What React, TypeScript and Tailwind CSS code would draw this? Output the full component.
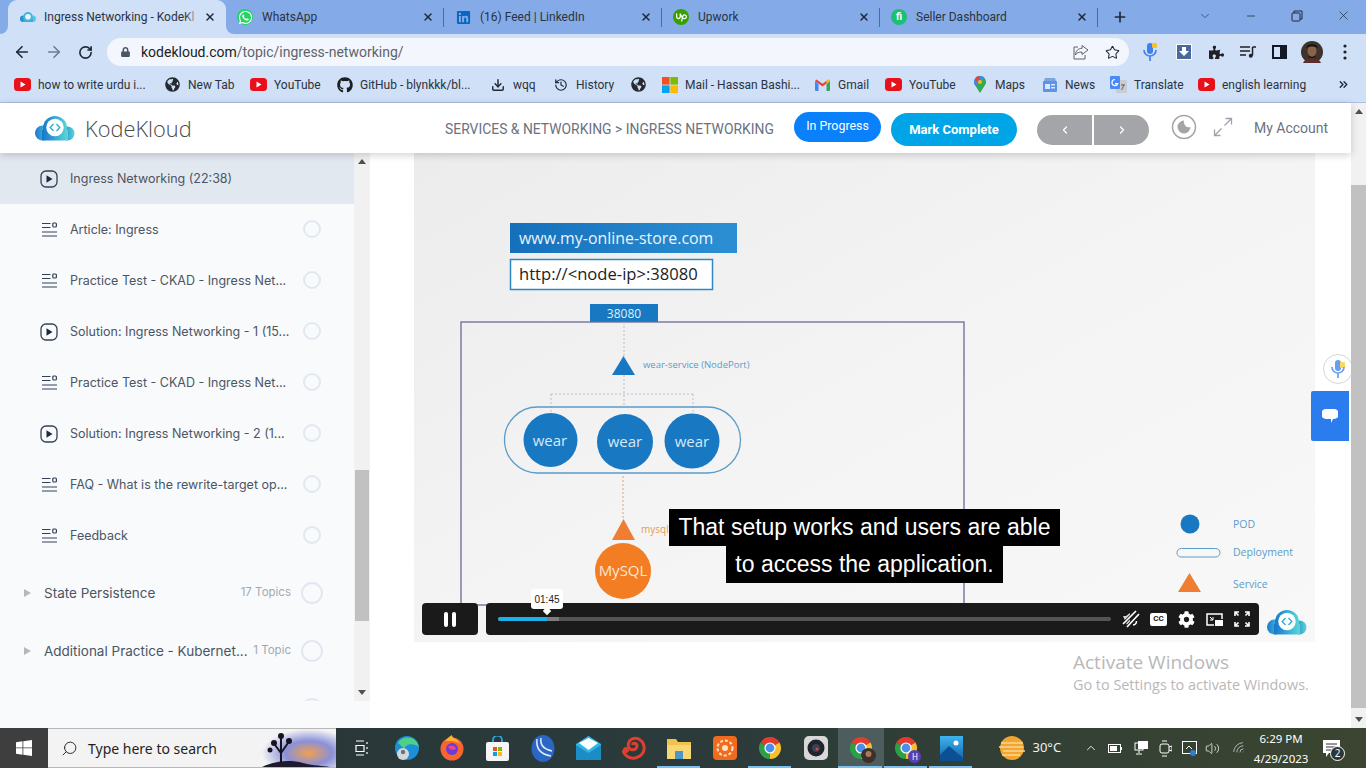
import React from "react";
import { ArrowLeft, ArrowRight, RotateCw, Star, Download, History, X, Plus, ChevronDown, Minus, ChevronsRight, ChevronLeft, ChevronRight, ChevronUp, Search, Volume2, Wifi } from "lucide-react";
import { FaWhatsapp, FaLinkedin, FaGithub, FaGlobeAmericas, FaPuzzlePiece, FaCog, FaLock } from "react-icons/fa";
import { SiUpwork } from "react-icons/si";

const Yt = () => (
  <svg width="17" height="13" viewBox="0 0 17 13" className="shrink-0"><rect width="17" height="13" rx="3.5" fill="#e8101a" /><path d="M6.5 3.5v6l5-3z" fill="#fff" /></svg>
);
const Globe = () => <FaGlobeAmericas className="w-[15px] h-[15px] text-[#26292e] shrink-0" />;
const Ms = () => (
  <svg width="16" height="16" viewBox="0 0 16 16" className="shrink-0"><rect width="7.6" height="7.6" fill="#f25022" /><rect x="8.4" width="7.6" height="7.6" fill="#7fba00" /><rect y="8.4" width="7.6" height="7.6" fill="#00a4ef" /><rect x="8.4" y="8.4" width="7.6" height="7.6" fill="#ffb900" /></svg>
);
const Gmail = () => (
  <svg width="15" height="12" viewBox="0 0 15 12" className="shrink-0"><path d="M0 2v9a1 1 0 0 0 1 1h2.5V5z" fill="#4285f4" /><path d="M15 2v9a1 1 0 0 1-1 1h-2.5V5z" fill="#34a853" /><path d="M0 2l7.5 5.5L15 2 13.5.4 7.5 4.8 1.500.4z" fill="#ea4335" /><path d="M11.500 5L15 2V1.500L13.500.4 11.500 2z" fill="#fbbc04" /></svg>
);
const Maps = () => (
  <svg width="12" height="17" viewBox="0 0 12 17" className="shrink-0"><path d="M6 0a6 6 0 0 0-4.600 9.800L6 17l4.600-7.200A6 6 0 0 0 6 0z" fill="#34a853" /><path d="M6 0a6 6 0 0 1 4.600 2.200L1.400 9.800A6 6 0 0 1 6 0z" fill="#4285f4" /><path d="M1.400 2.200A6 6 0 0 1 6 0v3L2.500 6z" fill="#ea4335" /><circle cx="6" cy="6" r="2" fill="#fbbc04" /></svg>
);
const News = () => (
  <svg width="16" height="15" viewBox="0 0 16 15" className="shrink-0"><path d="M3 1h10l1 3H2z" fill="#7fa3dd" /><rect x="1" y="4" width="14" height="11" rx="1" fill="#5a93e8" /><rect x="3" y="7" width="5" height="5" fill="#dbe7fb" /><rect x="9" y="7" width="4" height="1.500" fill="#dbe7fb" /><rect x="9" y="10" width="4" height="1.500" fill="#dbe7fb" /></svg>
);
const Translate = () => (
  <svg width="17" height="17" viewBox="0 0 17 17" className="shrink-0"><rect x="6" y="4" width="11" height="13" rx="1" fill="#c8ccd3" /><rect width="10" height="13" rx="1" fill="#4a8af4" /><path d="M5 3.500a3 3 0 1 0 2.700 4.200H5" stroke="#fff" strokeWidth="1.200" fill="none" /><path d="M11 9h4M13 8v1M11.500 14l2.500-5" stroke="#666" strokeWidth="1" fill="none" /></svg>
);

const Tab = ({ icon, title, active }: { icon: React.ReactNode; title: string; active?: boolean }) => (
  <div className={active ? "relative w-[218px] h-[34px] flex items-center pl-[12px] bg-[#cfe0f7] rounded-t-[9px] shrink-0" : "relative w-[218px] h-[34px] flex items-center pl-[11px] shrink-0"}>
    {active && (
      <>
        <svg width="8" height="8" viewBox="0 0 8 8" className="absolute -left-[8px] bottom-0"><path d="M8 0v8H0a8 8 0 0 0 8-8z" fill="#cfe0f7" /></svg>
        <svg width="8" height="8" viewBox="0 0 8 8" className="absolute -right-[8px] bottom-0"><path d="M0 0v8H8a8 8 0 0 1-8-8z" fill="#cfe0f7" /></svg>
      </>
    )}
    <div className="w-[16px] h-[16px] flex items-center justify-center shrink-0">{icon}</div>
    <div className={active ? "relative ml-[8px] w-[156px] h-[16px] leading-[16px] whitespace-nowrap text-[12px] text-[#2b3240]" : "ml-[9px] w-[160px] whitespace-nowrap text-[12px] text-[#2b3240]"}>
      {title}
      {active && <div className="absolute right-0 top-0 bottom-0 w-[16px] bg-gradient-to-r from-transparent to-[#cfe0f7]" />}
    </div>
    <X className="absolute right-[10px] top-[11px] w-[12px] h-[12px] text-[#1f2937]" strokeWidth={3} />
    {!active && <div className="absolute right-0 top-[8px] w-px h-[19px] bg-[#56698a]" />}
  </div>
);

const KLogo = ({ w, h }: { w: number; h: number }) => (
  <svg width={w} height={h} viewBox="0 0 40 25" className="shrink-0">
    <defs>
      <linearGradient id="kg" x1="0" x2="1" y1="0" y2="0"><stop offset="0" stopColor="#1878cc" /><stop offset="1" stopColor="#5ad6d8" /></linearGradient>
    </defs>
    <circle cx="7.500" cy="17" r="7.500" fill="url(#kg)" />
    <circle cx="32.500" cy="17.500" r="7" fill="url(#kg)" />
    <rect x="7" y="14" width="26" height="10.500" fill="url(#kg)" />
    <circle cx="20" cy="12" r="12" fill="url(#kg)" />
    <circle cx="20" cy="11.500" r="8.700" fill="#fff" />
    <path d="M18.500 8l-3.300 3.500 3.300 3.500M21.500 8l3.300 3.500-3.300 3.500" fill="none" stroke="#29a9d8" strokeWidth="1.300" />
  </svg>
);

const PlayIco = () => (
  <svg width="18" height="18" viewBox="0 0 18 18" className="shrink-0"><rect x="1" y="1" width="16" height="16" rx="5" fill="none" stroke="#334155" strokeWidth="1.300" /><path d="M6.500 5.300v7.400l6-3.700z" fill="#1e293b" /></svg>
);
const DocIco = () => (
  <svg width="15" height="15" viewBox="0 0 15 15" className="shrink-0"><path d="M0 1.500h8.500M0 5.500h8.500M0 10h15M0 14h15" stroke="#334155" strokeWidth="1.200" /><rect x="10.800" y="1" width="3.600" height="4" rx="1" fill="none" stroke="#334155" strokeWidth="1.200" /></svg>
);

const Topic = ({ t, video, current }: { t: string; video?: boolean; current?: boolean }) => (
  <div className={current ? "h-[51px] flex items-center pl-[40px] bg-[#e2e8f0]" : "h-[51px] flex items-center pl-[40px]"}>
    <div className="w-[18px] flex justify-center">{video ? <PlayIco /> : <DocIco />}</div>
    <div className="ml-[12px] mt-[2px] w-[233px] text-[12.500px] text-[#4b5563] whitespace-nowrap font-['Inter',sans-serif]">{t}</div>
    <div className="-mt-[1px] w-[18px] h-[18px] rounded-full border-2 border-[#e2e8f0]" />
  </div>
);
const Group = ({ t, n }: { t: string; n: string }) => (
  <div className="h-[58px] flex items-center pl-[24px] font-['Inter',sans-serif]">
    <svg width="7" height="8" viewBox="0 0 7 8" className="shrink-0"><path d="M0 0v8l7-4z" fill="#b4b8be" /></svg>
    <div className="ml-[13px] w-[202px] text-[13.500px] text-[#4b5563] whitespace-nowrap">{t}</div>
    <div className="w-[45px] text-right text-[11.500px] text-[#a3a9b3] whitespace-nowrap flex justify-end">{n}</div>
    <div className="ml-[10px] w-[22px] h-[22px] rounded-full border-2 border-[#e2e8f0] shrink-0" />
  </div>
);

const Chrome = ({ s = 24 }: { s?: number }) => (
  <svg width={s} height={s} viewBox="0 0 24 24" className="shrink-0">
    <path d="M12 12L2.470 6.500A11 11 0 0 1 21.530 6.500z" fill="#e33b2e" />
    <path d="M12 12L21.530 6.500A11 11 0 0 1 12 23z" fill="#f6c02c" />
    <path d="M12 12V23A11 11 0 0 1 2.470 6.500z" fill="#2d9f47" />
    <circle cx="12" cy="12" r="5.600" fill="#fff" />
    <circle cx="12" cy="12" r="4.400" fill="#4a90e8" />
  </svg>
);

const Slot = ({ children, active, line }: { children: React.ReactNode; active?: boolean; line?: boolean }) => (
  <div className={active ? "relative w-[45.4px] h-[40px] flex items-center justify-center bg-[#4d5c5c] shrink-0" : "relative w-[45.4px] h-[40px] flex items-center justify-center shrink-0"}>
    {children}
    {line && <div className="absolute bottom-0 left-0 right-[2px] h-[2px] bg-[#7cc0f0]" />}
  </div>
);

const Bm = ({ icon, label, w }: { icon: React.ReactNode; label?: string; w: string }) => (
  <div className={`${w} flex items-center shrink-0`}>
    <div className="w-[17px] flex justify-center shrink-0">{icon}</div>
    {label && <span className="ml-[7px] whitespace-nowrap">{label}</span>}
  </div>
);

export default function App() {
  return (
    <div className="relative w-[1366px] h-[768px] overflow-hidden flex flex-col bg-white font-['Roboto',sans-serif]">
      {/* Tab strip */}
      <div className="h-[34px] bg-[#84abe8] flex items-center pl-[8px] shrink-0">
        <Tab active title="Ingress Networking - KodeKl" icon={<svg width="16" height="12" viewBox="0 0 40 25"><circle cx="8" cy="17" r="8" fill="#2a8fd0" /><circle cx="32" cy="17" r="8" fill="#5ac8dc" /><rect x="8" y="14" width="24" height="11" fill="#3aa7d8" /><circle cx="20" cy="12" r="12" fill="#46b4dc" /><circle cx="20" cy="12" r="7" fill="#e8f6fb" /></svg>} />
        <Tab title="WhatsApp" icon={<div className="w-[16px] h-[16px] rounded-full bg-[#25d366] flex items-center justify-center"><FaWhatsapp className="w-[15px] h-[15px] text-white" /></div>} />
        <Tab title="(16) Feed | LinkedIn" icon={<FaLinkedin className="w-[15px] h-[15px] text-[#0a66c2]" />} />
        <Tab title="Upwork" icon={<div className="w-[16px] h-[16px] rounded-full bg-[#37a000] flex items-center justify-center"><SiUpwork className="w-[11px] h-[11px] text-white" /></div>} />
        <Tab title="Seller Dashboard" icon={<div className="w-[16px] h-[16px] rounded-full bg-[#1dbf73] flex items-center justify-center text-[10px] font-bold text-white leading-none">fi</div>} />
        <Plus className="ml-[14px] w-[16px] h-[16px] text-[#1f2937]" strokeWidth={2.5} />
        <ChevronDown className="ml-[70px] w-[14px] h-[14px] text-[#374151] -mt-[3px]" strokeWidth={1.300} />
        <Minus className="ml-[33px] w-[12px] h-[12px] text-[#1f2937] -mt-[3px]" strokeWidth={1.500} />
        <svg width="12" height="12" viewBox="0 0 12 12" className="ml-[34px] -mt-[3px]"><path d="M3 3V1h8v8H9" fill="none" stroke="#1f2937" /><rect x="1" y="3" width="8" height="8" rx="1" fill="none" stroke="#1f2937" /></svg>
        <X className="ml-[33px] w-[15px] h-[15px] text-[#1f2937] -mt-[3px]" strokeWidth={1.100} />
      </div>
      {/* Toolbar */}
      <div className="h-[36px] bg-[#cfe0f7] flex items-center pl-[13px] shrink-0">
        <ArrowLeft className="w-[18px] h-[18px] text-[#1f2937]" strokeWidth={2.200} />
        <ArrowRight className="ml-[14px] w-[18px] h-[18px] text-[#6f7c8e]" strokeWidth={2.200} />
        <RotateCw className="ml-[15px] w-[15px] h-[15px] text-[#1f2937]" strokeWidth={2.600} />
        <div className="ml-[14px] w-[1022px] h-[28px] rounded-full bg-[#f3f7fd] flex items-center pl-[14px]">
          <FaLock className="w-[9px] h-[10px] text-[#4b5563]" />
          <span className="ml-[11px] w-[262px] whitespace-nowrap text-[14px] text-[#202124]">kodekloud.com<span className="text-[#5f6368]">/topic/ingress-networking/</span></span>
          <svg width="16" height="16" viewBox="0 0 16 16" className="ml-[670px]"><path d="M9 1.500l6 4.500-6 4.500V8C5.500 8 3.500 9 2.500 11 2.500 7 5 4.500 9 4.300z M5 3H1v12h11v-4" fill="none" stroke="#5f6368" strokeWidth="1" /></svg>
          <Star className="ml-[16px] w-[15px] h-[15px] text-[#1f2937]" strokeWidth={1.700} />
        </div>
        <svg width="14" height="20" viewBox="0 0 14 20" className="ml-[14px]"><rect x="4" y="1" width="6" height="11" rx="3" fill="#3b82f0" /><rect x="9" y="1" width="5" height="5" rx="1" fill="#fbc02d" /><path d="M1 8a6 6 0 0 0 12 0M7 14v5" fill="none" stroke="#3b82f0" strokeWidth="1.700" /></svg>
        <div className="ml-[19px] w-[16px] h-[16px] bg-[#4a6a9d] border border-white flex items-center justify-center">
          <svg width="10" height="10" viewBox="0 0 10 10"><path d="M3 0h4v4h3L5 9 0 4h3z" fill="#fff" /></svg>
        </div>
        <FaPuzzlePiece className="ml-[17px] w-[15px] h-[15px] text-[#202124]" />
        <svg width="16" height="14" viewBox="0 0 16 14" className="ml-[16px]"><path d="M0 2h10M0 6h10M0 10h6" stroke="#202124" strokeWidth="1.500" /><path d="M12.500 2v8.500" stroke="#202124" strokeWidth="1.500" /><path d="M12.500 2H16" stroke="#202124" strokeWidth="1.500" /><circle cx="10.800" cy="10.800" r="2" fill="#202124" /></svg>
        <svg width="15" height="14" viewBox="0 0 15 14" className="ml-[16px]"><rect x="1" y="1" width="13" height="12" fill="none" stroke="#111827" strokeWidth="2" /><rect x="8" y="1" width="6" height="12" fill="#111827" /></svg>
        <svg width="22" height="22" viewBox="0 0 22 22" className="ml-[14px]"><circle cx="11" cy="11" r="11" fill="#3f342c" /><ellipse cx="11" cy="10" rx="4.500" ry="5.500" fill="#8a6449" /><path d="M5 7c1-5 11-5 12 0-3-2-9-2-12 0z" fill="#14100c" /><path d="M7 13c1 4 7 4 8 0l-1 4H8z" fill="#211a15" /><path d="M2 22c2-6 16-6 18 0z" fill="#5a2e2c" /></svg>
        <svg width="4" height="16" viewBox="0 0 4 16" className="ml-[20px]"><circle cx="2" cy="2" r="1.600" fill="#202124" /><circle cx="2" cy="8" r="1.600" fill="#202124" /><circle cx="2" cy="14" r="1.600" fill="#202124" /></svg>
      </div>
      {/* Bookmarks */}
      <div className="h-[33px] bg-[#cfe0f7] border-b border-[#aebfe0] flex items-center pl-[14px] pb-[3px] text-[12px] text-[#2b3240] shrink-0">
        <Bm w="w-[150px]" icon={<Yt />} label="how to write urdu i..." />
        <Bm w="w-[86px]" icon={<Globe />} label="New Tab" />
        <Bm w="w-[86px]" icon={<Yt />} label="YouTube" />
        <Bm w="w-[153px]" icon={<FaGithub className="w-[16px] h-[16px] text-[#1b1f23]" />} label="GitHub - blynkkk/bl..." />
        <Bm w="w-[63px]" icon={<Download className="w-[14px] h-[14px] text-[#1f2937]" strokeWidth={2.500} />} label="wqq" />
        <Bm w="w-[78px]" icon={<History className="w-[14px] h-[14px] text-[#1f2937]" />} label="History" />
        <Bm w="w-[31px]" icon={<Globe />} />
        <Bm w="w-[153px]" icon={<Ms />} label="Mail - Hassan Bashi..." />
        <Bm w="w-[71px]" icon={<Gmail />} label="Gmail" />
        <Bm w="w-[86px]" icon={<Yt />} label="YouTube" />
        <Bm w="w-[70px]" icon={<Maps />} label="Maps" />
        <Bm w="w-[69px]" icon={<News />} label="News" />
        <Bm w="w-[88px]" icon={<Translate />} label="Translate" />
        <Bm w="w-[128px]" icon={<Yt />} label="english learning" />
        <ChevronsRight className="ml-[11px] w-[13px] h-[13px] text-[#1f2937]" strokeWidth={2.500} />
      </div>
      {/* Page */}
      <div className="flex-1 min-h-0 flex">
        <div className="flex-1 min-w-0 flex flex-col">
          <div className="relative z-10 h-[50px] bg-white shadow-[0_2px_8px_rgba(0,0,0,0.18)] flex items-center pl-[35px] shrink-0">
            <KLogo w={40} h={25} />
            <span className="ml-[10px] w-[106px] mt-[2px] text-[21.800px] text-[#4a4a4a] font-['Open_Sans',sans-serif] font-light whitespace-nowrap">KodeKloud</span>
            <span className="ml-[254px] w-[329px] mt-[2px] whitespace-nowrap text-[13.900px] text-[#6b7280]">SERVICES &amp; NETWORKING &gt; INGRESS NETWORKING</span>
            <div className="ml-[20px] -mt-[3px] w-[87px] h-[30px] rounded-full bg-[#0a80fb] text-white text-[12.400px] flex items-center justify-center">In Progress</div>
            <div className="ml-[10px] mt-[3px] w-[126px] h-[33px] rounded-full bg-[#00a5e8] text-white text-[13px] font-bold flex items-center justify-center">Mark Complete</div>
            <div className="ml-[20px] mt-[4px] w-[55px] h-[30px] rounded-l-full bg-[#a3a5a8] flex items-center justify-center"><ChevronLeft className="w-[12px] h-[12px] text-white" strokeWidth={2.500} /></div>
            <div className="ml-[2px] mt-[4px] w-[55px] h-[30px] rounded-r-full bg-[#a3a5a8] flex items-center justify-center"><ChevronRight className="w-[12px] h-[12px] text-white" strokeWidth={2.500} /></div>
            <svg width="26" height="26" viewBox="0 0 26 26" className="ml-[22px] -mt-[2px]"><circle cx="13" cy="13" r="11.500" fill="none" stroke="#a3a5a8" strokeWidth="1.500" /><path d="M13 6.500a6.500 6.500 0 1 0 6.500 6.500 5.200 5.200 0 0 1-6.500-6.500z" fill="#a3a5a8" /></svg>
            <svg width="20" height="20" viewBox="0 0 20 20" className="ml-[16px] -mt-[2px]"><path d="M11.500 8.500L18.500 1.500M12.500 1.500h6v6M8.500 11.500L1.500 18.500M1.500 12.500v6h6" fill="none" stroke="#9ca3af" strokeWidth="1.300" /></svg>
            <span className="ml-[21px] text-[14px] text-[#6b7280] whitespace-nowrap">My Account</span>
          </div>
          <div className="flex-1 min-h-0 flex">
            {/* Sidebar */}
            <div className="w-[370px] shrink-0 bg-[#f8fafc] flex flex-col">
              <div className="h-[548px] flex overflow-hidden">
                <div className="w-[354px] shrink-0 overflow-hidden">
                  <Topic current video t="Ingress Networking (22:38)" />
                  <Topic t="Article: Ingress" />
                  <Topic t="Practice Test - CKAD - Ingress Net..." />
                  <Topic video t="Solution: Ingress Networking - 1 (15..." />
                  <Topic t="Practice Test - CKAD - Ingress Net..." />
                  <Topic video t="Solution: Ingress Networking - 2 (1..." />
                  <Topic t="FAQ - What is the rewrite-target op..." />
                  <Topic t="Feedback" />
                  <div className="h-[3px]" />
                  <Group t="State Persistence" n="17 Topics" />
                  <Group t="Additional Practice - Kubernet..." n="1 Topic" />
                  <Group t="" n="" />
                </div>
                <div className="w-[16px] bg-[#f1f1f1] flex flex-col items-center shrink-0">
                  <div className="h-[17px] flex items-center"><svg width="8" height="5" viewBox="0 0 8 5"><path d="M4 0l4 5H0z" fill="#505050" /></svg></div>
                  <div className="mt-[300px] w-[14px] h-[152px] bg-[#c1c1c1]" />
                  <div className="mt-[63px] h-[17px] flex items-center"><svg width="8" height="5" viewBox="0 0 8 5"><path d="M4 5l4-5H0z" fill="#505050" /></svg></div>
                </div>
              </div>
            </div>
            {/* Content */}
            <div className="flex-1 min-w-0 pl-[44px]">
              <div className="relative w-[901px] h-[489px] bg-gradient-to-br from-[#ececec] via-[#f4f4f4] to-[#f8f8f8] overflow-hidden">
                <svg className="absolute inset-0" width="901" height="489" viewBox="414 153 901 489" fontFamily="'Open Sans',sans-serif">
                  <defs>
                    <linearGradient id="bb" x1="0" x2="1" y1="0" y2="0"><stop offset="0" stopColor="#1570bb" /><stop offset="1" stopColor="#2c8fd4" /></linearGradient>
                  </defs>
                  <rect x="510" y="223" width="227" height="30" fill="url(#bb)" />
                  <text x="519" y="244" fontSize="15.900" fill="#eaf4fb">www.my-online-store.com</text>
                  <rect x="510.500" y="259.500" width="202" height="30" fill="#fff" stroke="#2f86c4" strokeWidth="1.500" />
                  <text x="519" y="280" fontSize="16.600" fill="#222">http://&lt;node-ip&gt;:38080</text>
                  <rect x="590" y="304" width="68" height="18" fill="#1878c2" />
                  <text x="624" y="318" fontSize="12" fill="#dff0fb" textAnchor="middle">38080</text>
                  <rect x="461" y="322" width="503" height="283" fill="none" stroke="#6b6b96" strokeWidth="1.300" />
                  <path d="M624 322v34" stroke="#b5c0cc" strokeDasharray="2 2" />
                  <path d="M624 375v32M551 394h142M551 394v19M693 394v19" stroke="#b5c0cc" strokeDasharray="2 2" fill="none" />
                  <path d="M623.500 356l11.500 19h-23z" fill="#1878c2" />
                  <text x="643" y="368" fontSize="9.500" fill="#5a9ccc">wear-service (NodePort)</text>
                  <rect x="504.500" y="407" width="236" height="66" rx="33" fill="none" stroke="#5b9cc8" strokeWidth="1.300" />
                  <circle cx="550.500" cy="440" r="27" fill="#1878c2" />
                  <circle cx="625" cy="442" r="28" fill="#1878c2" />
                  <circle cx="692" cy="441" r="27.500" fill="#1878c2" />
                  <text x="550" y="446" fontSize="15" fill="#d6e9f6" textAnchor="middle">wear</text>
                  <text x="625" y="447" fontSize="15" fill="#d6e9f6" textAnchor="middle">wear</text>
                  <text x="692" y="447" fontSize="15" fill="#d6e9f6" textAnchor="middle">wear</text>
                  <path d="M623 476v43" stroke="#d8a37c" strokeDasharray="2 2" />
                  <path d="M623.500 519l11.500 21h-23z" fill="#ef7d32" />
                  <text x="641" y="533" fontSize="10" fill="#e69a55">mysql</text>
                  <circle cx="623" cy="571" r="28" fill="#f37d22" />
                  <text x="623" y="576" fontSize="15" fill="#fde6d0" textAnchor="middle">MySQL</text>
                  <circle cx="1190" cy="524" r="9.500" fill="#1878c2" />
                  <text x="1233" y="528" fontSize="10.500" fill="#5a9ccc">POD</text>
                  <rect x="1177" y="548.500" width="43" height="8.500" rx="4.200" fill="none" stroke="#5b9cc8" />
                  <text x="1233" y="556" fontSize="10.500" fill="#5a9ccc">Deployment</text>
                  <path d="M1189.500 573l11.500 19h-23z" fill="#ef7d32" />
                  <text x="1233" y="588" fontSize="10.500" fill="#5a9ccc">Service</text>
                </svg>
                {/* Captions */}
                <div className="absolute left-[255px] top-[356px] w-[391px] h-[37px] bg-black text-white text-[23px] font-['Liberation_Sans',sans-serif] flex items-center justify-center whitespace-nowrap">That setup works and users are able</div>
                <div className="absolute left-[312px] top-[393px] w-[277px] h-[37px] bg-black text-white text-[23px] font-['Liberation_Sans',sans-serif] flex items-center justify-center whitespace-nowrap">to access the application.</div>
                {/* Controls */}
                <div className="absolute left-[8px] top-[450px] right-[56px] h-[32px] flex gap-[8px]">
                  <div className="w-[56px] rounded-[4px] bg-[#1a1a1a] flex items-center justify-center gap-[4px]">
                    <div className="w-[4px] h-[15px] rounded-[2px] bg-white" />
                    <div className="w-[4px] h-[15px] rounded-[2px] bg-white" />
                  </div>
                  <div className="relative flex-1 rounded-[4px] bg-[#1a1a1a] flex items-center pl-[12px]">
                    <div className="w-[613px] h-[4px] bg-[#555] rounded-full flex">
                      <div className="w-[49px] h-[4px] bg-[#1ab0e8] rounded-l-full" />
                      <div className="w-[12px] h-[4px] bg-[#7d7d7d]" />
                    </div>
                    <svg width="18" height="18" viewBox="0 0 18 18" className="ml-[11px]"><path d="M1 6h3l4-3v9l-3 3z" fill="#d8d8d8" /><path d="M1 14L14 1M5 17L17 4" stroke="#1a1a1a" strokeWidth="3.200" /><path d="M1 14L14 1M5 17L17 4" stroke="#fff" strokeWidth="1.700" /><path d="M11 15a4 4 0 0 0 3.500-4" fill="none" stroke="#fff" strokeWidth="1.500" /></svg>
                    <div className="ml-[10px] w-[17px] h-[13px] rounded-[2px] bg-white flex items-center justify-center text-[8px] font-bold text-[#1a1a1a] leading-none">CC</div>
                    <FaCog className="ml-[11px] w-[17px] h-[17px] text-white" />
                    <svg width="17" height="13" viewBox="0 0 17 13" className="ml-[11px]"><path d="M8 12H1V1h15v5" fill="none" stroke="#fff" strokeWidth="1.500" /><rect x="9" y="7" width="8" height="6" fill="#fff" /><path d="M4 4l3 3M4 7h3V4" fill="none" stroke="#fff" /></svg>
                    <svg width="16" height="16" viewBox="0 0 16 16" className="ml-[11px]"><path d="M1 5V1h4M1 1l3.500 3.500M11 1h4v4M15 1l-3.500 3.500M1 11v4h4M1 15l3.500-3.500M15 11v4h-4M15 15l-3.500-3.500" fill="none" stroke="#fff" strokeWidth="1.600" /></svg>
                    <div className="absolute left-[45px] -top-[14px] w-[32px] h-[20px] rounded-[3px] bg-white text-[10px] text-[#222] flex items-center justify-center font-['Liberation_Sans',sans-serif]">01:45</div>
                    <div className="absolute left-[58px] top-[5px] w-[6px] h-[6px] rotate-45 bg-white" />
                  </div>
                </div>
                <div className="absolute left-[853px] top-[457px]"><KLogo w={40} h={25} /></div>
              </div>
            </div>
          </div>
        </div>
        {/* Page scrollbar */}
        <div className="w-[15px] bg-[#f1f1f1] flex flex-col items-center shrink-0">
          <div className="h-[17px] flex items-center"><svg width="8" height="5" viewBox="0 0 8 5"><path d="M4 0l4 5H0z" fill="#505050" /></svg></div>
          <div className="mt-[65px] w-full h-[523px] bg-[#c1c1c1]" />
          <div className="mt-[3px] h-[17px] flex items-center"><svg width="8" height="5" viewBox="0 0 8 5"><path d="M4 5l4-5H0z" fill="#505050" /></svg></div>
        </div>
      </div>
      {/* Taskbar */}
      <div className="h-[40px] bg-gradient-to-r from-[#273537] via-[#2b3a3a] to-[#3b4530] flex items-center text-white shrink-0 font-['Noto_Sans',sans-serif]">
        <div className="w-[48px] h-[40px] bg-[#3e3e3e] flex items-center justify-center">
          <svg width="16" height="16" viewBox="0 0 16 16"><path d="M0 2.200L6.500 1.300V7.500H0zM7.300 1.200L16 0V7.500H7.300zM0 8.300H6.500V14.700L0 13.800zM7.300 8.300H16V16L7.300 14.800z" fill="#fff" /></svg>
        </div>
        <div className="relative w-[288px] h-[40px] bg-[#f3f3f3] border-y border-[#b8b8b8] flex items-center pl-[13px] text-[14px] text-[#1f1f1f] overflow-hidden">
          <Search className="w-[17px] h-[17px] text-[#1f1f1f] -scale-x-100" strokeWidth={1.300} />
          <span className="ml-[10px] whitespace-nowrap font-['Noto_Sans',sans-serif]">Type here to search</span>
          <svg width="78" height="40" viewBox="0 0 78 40" className="absolute right-0 top-0">
            <defs><radialGradient id="sk" cx="0.65" cy="0.6" r="0.6"><stop offset="0" stopColor="#f0a050" /><stop offset="0.5" stopColor="#8a90d8" /><stop offset="1" stopColor="#f3f3f3" /></radialGradient></defs>
            <rect width="78" height="40" fill="url(#sk)" />
            <path d="M0 40c15-8 30-10 45-6s25 2 33 6z" fill="#1d1a2c" />
            <path d="M23 34V18M23 24l-6-8M23 24l7-10M23 20v-12" stroke="#161222" strokeWidth="2" />
            <circle cx="16" cy="14" r="3" fill="#161222" /><circle cx="23" cy="7" r="3" fill="#161222" /><circle cx="31" cy="12" r="3" fill="#161222" /><circle cx="12" cy="21" r="2.500" fill="#161222" />
          </svg>
        </div>
        <div className="flex ml-[3px]">
          <Slot><svg width="17" height="17" viewBox="0 0 17 17"><path d="M3 1h8M3 5.500h8v6H3zM3 15h8M14 2v2M14 7v2M14 12v2" stroke="#fff" fill="none" strokeWidth="1.200" /></svg></Slot>
          <Slot><svg width="26" height="26" viewBox="0 0 26 26"><circle cx="13" cy="13" r="12" fill="#1b8fd8" /><path d="M4 8C8 0 22 0 25 12c-5-4-13-4-15 2-2-3-4-4-6-6z" fill="#4fd08a" /><circle cx="9" cy="19" r="6" fill="#d3d8dc" /><circle cx="9" cy="17" r="2.200" fill="#6b7280" /></svg></Slot>
          <Slot><svg width="24" height="26" viewBox="0 0 24 26"><circle cx="12" cy="14" r="11.500" fill="#f8662f" /><path d="M5 6C9 2 10 1 12 0c0 3 3 3 5 5l3 4C15 5 9 6 5 6z" fill="#ffb02e" /><circle cx="12" cy="14" r="6" fill="#6d3bd6" /><path d="M8 12c3-3 8-1 8 2-3 2-6 1-8-2z" fill="#e9458c" /></svg></Slot>
          <Slot><svg width="23" height="25" viewBox="0 0 23 25"><path d="M7 7V4a4.500 4.500 0 0 1 9 0v3" fill="none" stroke="#27a8e0" strokeWidth="1.800" /><rect x="0" y="6" width="23" height="19" rx="2" fill="#f5f5f5" /><rect x="7" y="11" width="4" height="4" fill="#f25022" /><rect x="12" y="11" width="4" height="4" fill="#7fba00" /><rect x="7" y="16" width="4" height="4" fill="#00a4ef" /><rect x="12" y="16" width="4" height="4" fill="#ffb900" /></svg></Slot>
          <Slot><svg width="24" height="27" viewBox="0 0 24 27"><ellipse cx="12" cy="13.500" rx="11.500" ry="13.500" fill="#2c66c4" /><path d="M6 4c-1 8 2 15 14 17M10 3c-1 6 2 11 11 13" fill="none" stroke="#dbe9fb" strokeWidth="1.500" /></svg></Slot>
          <Slot><svg width="25" height="24" viewBox="0 0 25 24"><path d="M0 9L12.500 0 25 9v15H0z" fill="#1b8cc4" /><path d="M0 9l12.500 8L25 9v-1L12.500 0 0 8z" fill="#33b5e8" /><path d="M3 7l9.500 7L22 7 12.500 2z" fill="#fff" /></svg></Slot>
          <Slot><svg width="24" height="24" viewBox="0 0 24 24"><path d="M1 14c1 6 7 9 12 8 6-1 10-6 9-12S15 1 10 3C6 5 5 10 8 13c3 2 7 0 7-3s-4-4-5-1" fill="none" stroke="#df3f2f" strokeWidth="3" /><circle cx="4" cy="14" r="3" fill="#df3f2f" /></svg></Slot>
          <Slot line><svg width="24" height="22" viewBox="0 0 24 22"><path d="M0 2h9l2 3h13v17H0z" fill="#f2c14e" /><rect x="0" y="8" width="24" height="14" fill="#f7d774" /><rect x="8" y="14" width="8" height="8" fill="#4e95c8" /></svg></Slot>
          <Slot><svg width="24" height="24" viewBox="0 0 24 24"><rect width="24" height="24" rx="4" fill="#f26a1d" /><circle cx="12" cy="12" r="7.500" fill="none" stroke="#ffe2c4" strokeWidth="2" strokeDasharray="3 2" /><circle cx="12" cy="12" r="3" fill="#ffe2c4" /></svg></Slot>
          <Slot line><Chrome /></Slot>
          <Slot><svg width="24" height="24" viewBox="0 0 24 24"><rect width="24" height="24" rx="5" fill="#d8d8d8" /><circle cx="12" cy="12" r="8.500" fill="#20242c" /><circle cx="12" cy="12" r="4" fill="#3b4150" /><circle cx="13" cy="13" r="1.500" fill="#d6404c" /></svg></Slot>
          <Slot active line><div className="relative"><Chrome /><svg width="15" height="15" viewBox="0 0 15 15" className="absolute -right-[3px] -bottom-[3px]"><circle cx="7.500" cy="7.500" r="7.500" fill="#3c3028" /><circle cx="7.500" cy="6" r="3" fill="#a87a5c" /></svg></div></Slot>
          <Slot line><div className="relative"><Chrome /><div className="absolute -right-[3px] -bottom-[3px] w-[13px] h-[13px] rounded-full bg-[#5b3fb5] text-[8px] text-white flex items-center justify-center leading-none">H</div></div></Slot>
          <Slot line><svg width="23" height="25" viewBox="0 0 23 25"><defs><linearGradient id="ph" x1="0" x2="0" y1="0" y2="1"><stop offset="0" stopColor="#3fb4ee" /><stop offset="1" stopColor="#0f5fa6" /></linearGradient></defs><rect width="23" height="25" fill="url(#ph)" /><path d="M0 19l9-9 14 12v3H0z" fill="#0c4f92" /><circle cx="16" cy="7" r="2.500" fill="#fff" /></svg></Slot>
        </div>
        <svg width="26" height="26" viewBox="0 0 26 26" className="ml-[25px]"><circle cx="13" cy="13" r="12" fill="#f3a52d" /><path d="M2 8h22M0 12h24M4 16h22M3 20h18" stroke="#f8d896" strokeWidth="1.500" /></svg>
        <span className="ml-[7px] text-[13px] text-[#f1f1f1] whitespace-nowrap">30°C</span>
        <ChevronUp className="ml-[23px] w-[14px] h-[14px] text-white" strokeWidth={1.500} />
        <svg width="14" height="11" viewBox="0 0 14 11" className="ml-[10px]"><rect x="0.500" y="1.500" width="12" height="8" fill="none" stroke="#fff" /><rect x="2" y="3" width="7" height="5" fill="#fff" /><rect x="13" y="4" width="1" height="3" fill="#fff" /></svg>
        <svg width="15" height="16" viewBox="0 0 15 16" className="ml-[12px]"><rect x="4" y="1" width="10" height="8" fill="#fff" /><rect x="1" y="3" width="8" height="7" fill="none" stroke="#fff" /><path d="M5 10v3M2 14h6" stroke="#fff" /></svg>
        <svg width="13" height="17" viewBox="0 0 13 17" className="ml-[10px]"><rect x="1" y="4" width="9" height="9" rx="2" fill="none" stroke="#fff" /><path d="M10 7l3-1v5l-3-1M3 1h5M3 16h5" stroke="#fff" fill="none" /></svg>
        <svg width="15" height="15" viewBox="0 0 15 15" className="ml-[10px]"><rect x="0.500" y="0.500" width="14" height="12" fill="none" stroke="#fff" /><path d="M4 8l3-3 3 3" fill="none" stroke="#fff" /><circle cx="11" cy="12" r="3" fill="#2f80d0" /></svg>
        <Volume2 className="ml-[8px] w-[15px] h-[15px] text-white" strokeWidth={1.200} />
        <Wifi className="ml-[12px] w-[15px] h-[15px] text-[#cfd4d4] -rotate-45" strokeWidth={1.200} />
        <div className="ml-[4px] mt-[1px] w-[60px] text-center text-[11.500px] leading-[20px] text-white whitespace-nowrap">
          <div>6:29 PM</div>
          <div>4/29/2023</div>
        </div>
        <div className="relative ml-[12px]">
          <svg width="17" height="17" viewBox="0 0 17 17"><path d="M0 0h17v13H6l-3 4v-4H0z" fill="#fff" /><path d="M3 4h11M3 7h11M3 10h8" stroke="#333" /></svg>
          <div className="absolute left-[7px] top-[6px] w-[15px] h-[15px] rounded-full bg-[#2a3636] border border-white text-[10px] flex items-center justify-center leading-none">2</div>
        </div>
      </div>
      {/* Overlays */}
      <div className="absolute left-[1323px] top-[354px] w-[28px] h-[30px] overflow-hidden">
        <div className="w-[30px] h-[30px] rounded-full bg-white border border-[#d1d5db] flex items-center justify-center">
          <svg width="16" height="20" viewBox="0 0 16 20"><rect x="5" y="1" width="6" height="11" rx="3" fill="#6a9df0" /><rect x="10" y="3" width="5" height="6" rx="1" fill="#fbd75b" /><path d="M2 8a6 6 0 0 0 12 0M8 14v5" fill="none" stroke="#6a9df0" strokeWidth="1.700" /></svg>
        </div>
      </div>
      <div className="absolute left-[1311px] top-[391px] w-[38px] h-[50px] rounded-l-[2px] bg-[#2b7cec] flex items-center justify-center">
        <svg width="16" height="15" viewBox="0 0 16 15"><path d="M4 0h8a4 4 0 0 1 0 10h-1l-2 4v-4H4A4 4 0 0 1 4 0z" fill="#fff" /></svg>
      </div>
      <div className="absolute left-[1073px] top-[649px] text-[#b8b8b8] font-['Open_Sans',sans-serif] whitespace-nowrap">
        <div className="text-[19px] leading-[26px]">Activate Windows</div>
        <div className="text-[14.400px] leading-[20px]">Go to Settings to activate Windows.</div>
      </div>
    </div>
  );
}
